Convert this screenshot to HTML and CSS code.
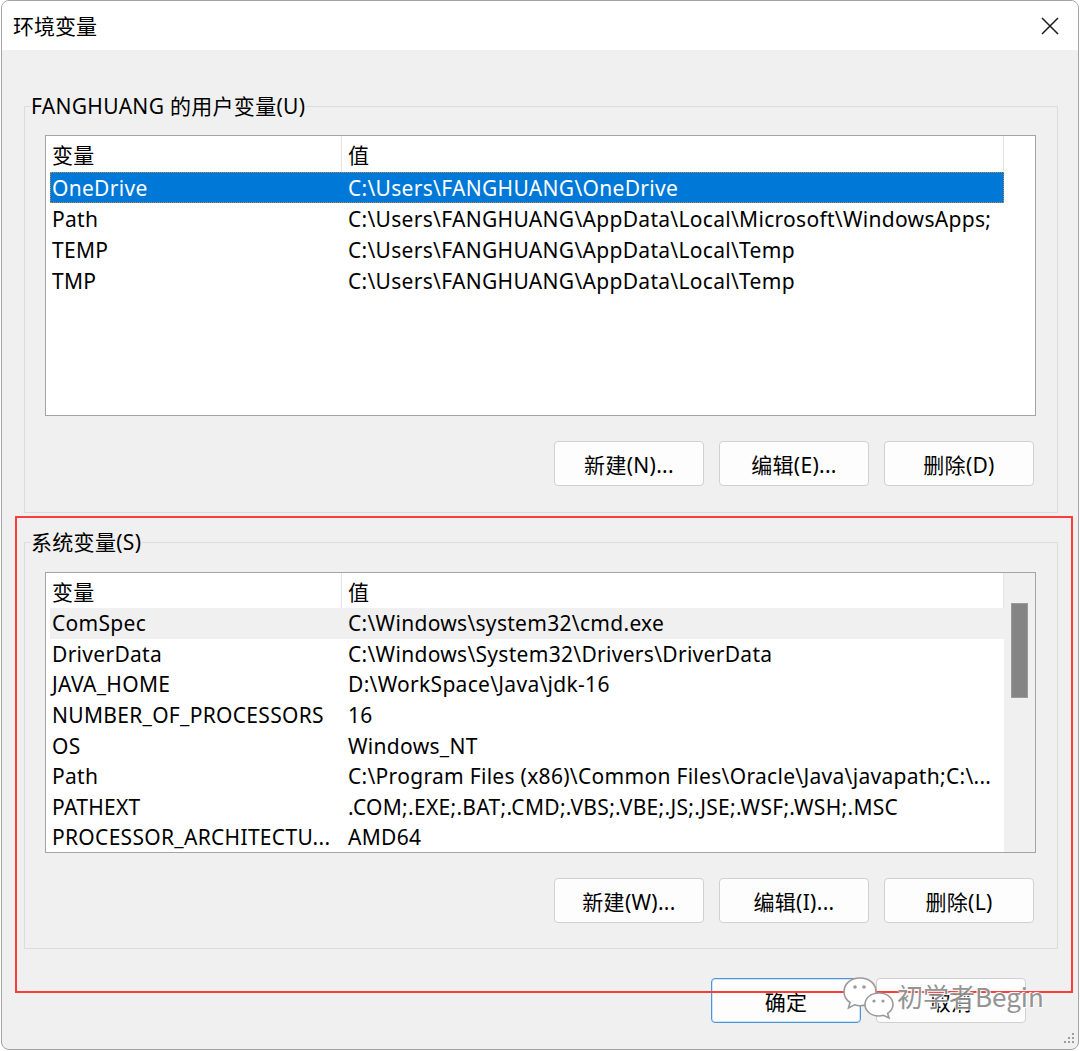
FILE: index.html
```html
<!DOCTYPE html>
<html lang="zh-CN">
<head>
<meta charset="utf-8">
<title>环境变量</title>
<link rel="stylesheet" href="styles.css">
</head>
<body>
<div class="window">
  <div class="titlebar">
    <span class="title">环境变量</span>
    <svg class="close" width="18" height="18" viewBox="0 0 18 18"><path d="M1 1 L17 17 M17 1 L1 17" stroke="#1a1a1a" stroke-width="1.5" fill="none"/></svg>
  </div>
  <div class="content">
    <fieldset class="group">
      <legend>FANGHUANG 的用户变量(U)</legend>
      <div class="list">
        <div class="table">
          <div class="head"><span>变量</span><span>值</span></div>
          <div class="row selected"><span>OneDrive</span><span>C:\Users\FANGHUANG\OneDrive</span></div>
          <div class="row"><span>Path</span><span>C:\Users\FANGHUANG\AppData\Local\Microsoft\WindowsApps;</span></div>
          <div class="row"><span>TEMP</span><span>C:\Users\FANGHUANG\AppData\Local\Temp</span></div>
          <div class="row"><span>TMP</span><span>C:\Users\FANGHUANG\AppData\Local\Temp</span></div>
        </div>
        <div class="spacer"></div>
      </div>
      <div class="buttons">
        <button class="btn">新建(N)...</button>
        <button class="btn">编辑(E)...</button>
        <button class="btn">删除(D)</button>
      </div>
    </fieldset>
    <fieldset class="group sys">
      <legend>系统变量(S)</legend>
      <div class="list">
        <div class="table dense">
          <div class="head"><span>变量</span><span>值</span></div>
          <div class="row hover"><span>ComSpec</span><span>C:\Windows\system32\cmd.exe</span></div>
          <div class="row"><span>DriverData</span><span>C:\Windows\System32\Drivers\DriverData</span></div>
          <div class="row"><span>JAVA_HOME</span><span>D:\WorkSpace\Java\jdk-16</span></div>
          <div class="row"><span>NUMBER_OF_PROCESSORS</span><span>16</span></div>
          <div class="row"><span>OS</span><span>Windows_NT</span></div>
          <div class="row"><span>Path</span><span>C:\Program Files (x86)\Common Files\Oracle\Java\javapath;C:\...</span></div>
          <div class="row"><span>PATHEXT</span><span>.COM;.EXE;.BAT;.CMD;.VBS;.VBE;.JS;.JSE;.WSF;.WSH;.MSC</span></div>
          <div class="row"><span>PROCESSOR_ARCHITECTU...</span><span>AMD64</span></div>
        </div>
        <div class="scrollbar"><div class="thumb"></div></div>
      </div>
      <div class="buttons">
        <button class="btn">新建(W)...</button>
        <button class="btn">编辑(I)...</button>
        <button class="btn">删除(L)</button>
      </div>
    </fieldset>
    <div class="footer">
      <button class="btn default">确定</button>
      <button class="btn">取消</button>
    </div>
  </div>
  <div class="highlight"></div>
  <div class="watermark">
    <svg class="wechat" width="58" height="52" viewBox="0 0 58 52">
      <path d="M18 6 C8 6 2 12.5 2 20 C2 24.5 4.5 28 8 30.5 L6.5 36 L12.5 32.8 C14.3 33.4 16 33.7 18 33.7 C28 33.7 34 27.5 34 20 C34 12.5 28 6 18 6 Z" fill="#fff" stroke="#9a9a9a" stroke-width="1.6"/>
      <circle cx="13" cy="15" r="1.8" fill="#9a9a9a"/>
      <circle cx="22" cy="15" r="1.8" fill="#9a9a9a"/>
      <path d="M37 21 C28.5 21 23 26.5 23 32.5 C23 38.5 28.5 44 37 44 C38.6 44 40 43.8 41.5 43.3 L47 46 L45.6 41.3 C48.8 39.2 51 36 51 32.5 C51 26.5 45.5 21 37 21 Z" fill="#fff" stroke="#9a9a9a" stroke-width="1.6"/>
      <circle cx="32" cy="29" r="1.6" fill="#9a9a9a"/>
      <circle cx="41" cy="29" r="1.6" fill="#9a9a9a"/>
    </svg>
    <span class="wm-text">初学者Begin</span>
  </div>
  <svg class="grip" width="14" height="14" viewBox="0 0 14 14">
    <rect x="11" y="1" width="2" height="2" fill="#9d9d9d"/>
    <rect x="7" y="5" width="2" height="2" fill="#9d9d9d"/>
    <rect x="11" y="5" width="2" height="2" fill="#9d9d9d"/>
    <rect x="3" y="9" width="2" height="2" fill="#9d9d9d"/>
    <rect x="7" y="9" width="2" height="2" fill="#9d9d9d"/>
    <rect x="11" y="9" width="2" height="2" fill="#9d9d9d"/>
  </svg>
</div>
</body>
</html>
```

FILE: styles.css
```css
html, body {
  margin: 0;
  padding: 0;
  background: #ffffff;
}

body {
  font-family: "Noto Sans", "Noto Sans CJK SC", sans-serif;
  font-size: 21px;
  letter-spacing: 0.3px;
  color: #000;
}

.window {
  position: relative;
  box-sizing: border-box;
  width: 1078px;
  height: 1050px;
  margin-left: 1px;
  border: 1px solid #a3a3a3;
  border-radius: 8px;
  overflow: hidden;
  background: #f0f0f0;
  display: flex;
  flex-direction: column;
}

.titlebar {
  height: 49px;
  flex: none;
  background: #ffffff;
  display: flex;
  align-items: center;
  justify-content: space-between;
  padding: 0 19px 0 11px;
}

.title {
  font-family: "Noto Sans CJK SC", sans-serif;
  font-size: 21px;
  letter-spacing: 0;
  color: #000;
  margin-top: -1px;
}

.close {
  display: block;
  margin-top: 1px;
}

.content {
  flex: 1;
  padding: 42px 20px 0 22px;
  display: flex;
  flex-direction: column;
}

.group {
  margin: 0;
  padding: 0 21px 26px 20px;
  border: 1px solid #dcdcdc;
  min-width: 0;
}

.group.sys {
  margin-top: 15px;
  padding-bottom: 25px;
}

.group legend {
  padding: 0 1px;
  margin-left: -15px;
  line-height: 28px;
  height: 28px;
  font-size: 21px;
  color: #000;
}

.list {
  margin-top: 15px;
  height: 281px;
  box-sizing: border-box;
  border: 1px solid #a4a4a4;
  background: #ffffff;
  display: flex;
  overflow: hidden;
}

.sys .list {
  margin-top: 16px;
}

.table {
  flex: 1;
  min-width: 0;
}

.head {
  height: 36px;
  display: grid;
  grid-template-columns: 296px 1fr;
  align-items: center;
}

.head span {
  height: 100%;
  display: flex;
  align-items: center;
  padding-left: 6px;
  border-right: 1px solid #e5e5e5;
  box-sizing: border-box;
}

.dense .head {
  height: 35px;
}

.row {
  margin-left: 4px;
  height: 31px;
  display: grid;
  grid-template-columns: 292px 1fr;
  align-items: center;
  white-space: nowrap;
  box-sizing: border-box;
}

.dense .row {
  height: 30.6px;
}

.row span {
  padding-left: 2px;
  overflow: hidden;
}

.row span + span {
  padding-left: 6px;
}

.row.selected {
  background: #0078d7;
  color: #ffffff;
  outline: 1px dotted #b58b55;
  outline-offset: -1px;
}

.row.hover {
  background: #f0f0f0;
}

.spacer {
  width: 31px;
  flex: none;
}

.scrollbar {
  width: 31px;
  flex: none;
  background: #f0f0f0;
  padding: 30px 0 0 7px;
  box-sizing: border-box;
}

.thumb {
  width: 17px;
  height: 95px;
  background: #858585;
  box-sizing: border-box;
  border: 1px solid #9a9a9a;
}

.buttons {
  margin-top: 25px;
  margin-right: 2px;
  display: flex;
  justify-content: flex-end;
  gap: 15px;
}

.btn {
  width: 150px;
  height: 45px;
  box-sizing: border-box;
  background: #fdfdfd;
  border: 1px solid #d0d0d0;
  border-radius: 4px;
  font-family: "Noto Sans", "Noto Sans CJK SC", sans-serif;
  font-size: 21px;
  letter-spacing: 0.3px;
  color: #000;
  padding: 0;
}

.btn.default {
  border: 1px solid #4a96d9;
  box-shadow: inset 0 0 0 1px #cfe3f5;
}

.footer {
  margin-top: 29px;
  margin-right: 32px;
  display: flex;
  justify-content: flex-end;
  gap: 15px;
}

.highlight {
  position: absolute;
  left: 13px;
  top: 515px;
  width: 1058px;
  height: 477px;
  box-sizing: border-box;
  border: 2px solid #ff3c3c;
  pointer-events: none;
}

.watermark {
  position: absolute;
  left: 840px;
  top: 970px;
  display: flex;
  align-items: flex-start;
  pointer-events: none;
}

.wechat {
  display: block;
  margin-top: 1px;
}

.wm-text {
  margin-left: -3px;
  margin-top: 10px;
  font-family: "Noto Sans CJK SC", sans-serif;
  font-size: 26px;
  letter-spacing: 0;
  line-height: 30px;
  color: #8c8c8c;
  text-shadow: 0 0 1px #fff, 0 0 2px #fff, 1px 1px 0 #fff, -1px -1px 0 #fff;
  opacity: 0.92;
}

.grip {
  position: absolute;
  right: 3px;
  bottom: 3px;
}
```
